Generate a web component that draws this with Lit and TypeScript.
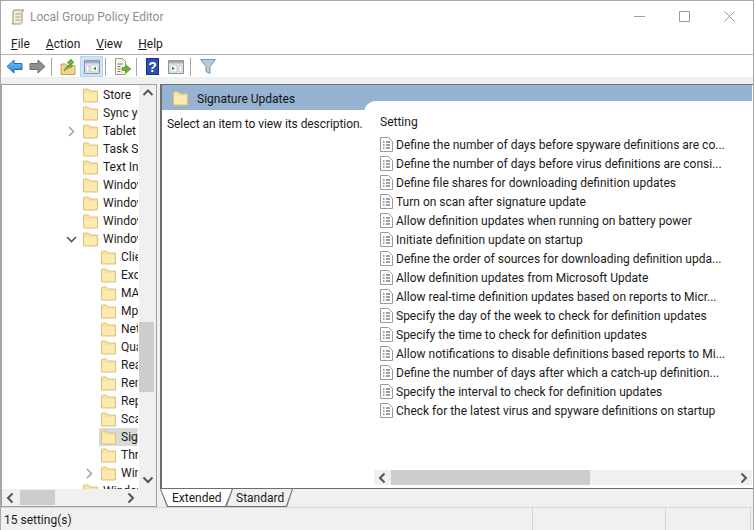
import { LitElement, html, css, svg } from "lit";
import { customElement } from "lit/decorators.js";

const folder = svg`<svg class="fold" width="17" height="15" viewBox="0 0 17 15"><path d="M1.500 3V2q0-1 1-1H6.500L8 3h7.500v11h-14z" fill="#f9e3a0" stroke="#dcc17c"/><path d="M2.500 5h12v8h-12z" fill="#fdeaae"/></svg>`;
const chevR = svg`<svg width="9" height="11" viewBox="0 0 9 11"><path d="M2 1l4.500 4.500L2 10" fill="none" stroke="#a6a6a6" stroke-width="1.600"/></svg>`;
const chevD = svg`<svg width="11" height="9" viewBox="0 0 11 9"><path d="M1 2l4.500 4.500L10 2" fill="none" stroke="#555" stroke-width="1.600"/></svg>`;
const doc = svg`<svg width="13" height="15" viewBox="0 0 13 15"><path d="M.5.5h8l4 4v10H.5z" fill="#fff" stroke="#9a9a9a"/><path d="M3 5h1.500M3 8h1.500M3 11h1.500M6 5h4M6 8h4M6 11h4" stroke="#444" stroke-width="1.100"/></svg>`;
const scrollArrow = (d: string) => {
  const paths: Record<string, string> = { u: "M1.500 7l4.500-4.500L10.500 7", d: "M1.500 2.500L6 7l4.500-4.500", l: "M7.500 1.500L3 6l4.500 4.500", r: "M3.500 1.500L8 6l-4.500 4.500" };
  return svg`<svg class="sa" width="12" height="12" viewBox="0 0 12 12"><path d=${paths[d]} fill="none" stroke="#555" stroke-width="2"/></svg>`;
};

const tree: [number, string, string, boolean?][] = [
  [0, "", "Store"], [0, "", "Sync your settings"], [0, "r", "Tablet PC"], [0, "", "Task Scheduler"], [0, "", "Text Input"],
  [0, "", "Windows Calendar"], [0, "", "Windows Color System"], [0, "", "Windows Customer"], [0, "d", "Windows Defender"],
  [1, "", "Client Interface"], [1, "", "Exclusions"], [1, "", "MAPS"], [1, "", "MpEngine"], [1, "", "Network Inspection"],
  [1, "", "Quarantine"], [1, "", "Real-time Protection"], [1, "", "Remediation"], [1, "", "Reporting"], [1, "", "Scan"],
  [1, "", "Signature Updates", true], [1, "", "Threats"], [1, "r", "Windows Defender"], [0, "", "Windows Error"],
];
const settings = [
  "Define the number of days before spyware definitions are co...",
  "Define the number of days before virus definitions are consi...",
  "Define file shares for downloading definition updates",
  "Turn on scan after signature update",
  "Allow definition updates when running on battery power",
  "Initiate definition update on startup",
  "Define the order of sources for downloading definition upda...",
  "Allow definition updates from Microsoft Update",
  "Allow real-time definition updates based on reports to Micr...",
  "Specify the day of the week to check for definition updates",
  "Specify the time to check for definition updates",
  "Allow notifications to disable definitions based reports to Mi...",
  "Define the number of days after which a catch-up definition...",
  "Specify the interval to check for definition updates",
  "Check for the latest virus and spyware definitions on startup",
];

@customElement("app-root")
export class AppRoot extends LitElement {
  static styles = css`
    :host { display: flex; flex-direction: column; width: 754px; height: 530px; box-sizing: border-box; background: #fff; border-top: 1px solid #a8a8a8; border-left: 1px solid #a8a8a8; border-right: 1px solid #a8a8a8; font: 12px Roboto, "Noto Sans", sans-serif; color: #1a1a1a; overflow: hidden; }
    svg { display: block; flex: none; }
    .title { height: 30px; flex: none; display: flex; align-items: center; padding: 1px 0 0 9px; gap: 4px; color: #8f8f8f; box-sizing: border-box; }
    .title .t { flex: 1; }
    .winbtns { display: flex; align-items: center; padding-right: 18px; gap: 34px; }
    .menu { height: 24px; flex: none; box-sizing: border-box; display: flex; align-items: center; padding: 2px 0 0 10px; gap: 16px; border-bottom: 1px solid #b4b4b4; }
    .menu u { text-decoration: underline; text-underline-offset: 1px; }
    .tools { height: 22px; flex: none; display: flex; align-items: center; padding: 1px 0 0 5px; box-sizing: border-box; }
    .sep { width: 1px; height: 18px; background: #a5a5a5; flex: none; }
    .ml2 { margin-left: 2px; } .ml4 { margin-left: 4px; } .ml5 { margin-left: 5px; } .ml6 { margin-left: 6px; } .ml8 { margin-left: 8px; } .ml9 { margin-left: 9px; }
    .active { background: #cce4f7; border: 1px solid #b4d6ef; height: 21px; width: 23px; display: flex; align-items: center; justify-content: center; box-sizing: border-box; flex: none; }
    .main { flex: 1; min-height: 0; display: flex; background: #f0f0f0; padding-top: 7px; gap: 3px; }
    .treebox { width: 156px; height: 423px; flex: none; box-sizing: border-box; background: #fff; border: 1px solid #a0a0a0; display: grid; grid-template-columns: 1fr 17px; grid-template-rows: 1fr 17px; }
    .rows { overflow: hidden; min-width: 0; min-height: 0; padding-top: 1px; }
    .row { height: 18px; display: flex; align-items: center; white-space: nowrap; padding-right: 1px; }
    .row .exp { width: 13px; margin-left: 63px; display: flex; align-items: center; justify-content: center; flex: none; }
    .row.l1 .exp { margin-left: 81px; }
    .row .sel { display: flex; align-items: center; gap: 4px; margin-left: 3px; padding-left: 1px; flex: 1; min-width: 0; height: 18px; overflow: hidden; }
    .row.cur .sel { background: #d9d9d9; }
    .vbar { background: #f0f0f0; display: flex; flex-direction: column; min-height: 0; }
    .arrow { height: 17px; width: 17px; display: flex; align-items: center; justify-content: center; flex: none; }
    .vtrack { flex: 1; }
    .vthumb { width: 15px; height: 70px; background: #cdcdcd; margin-top: 220px; }
    .hbar { background: #f0f0f0; display: flex; align-items: center; }
    .corner { background: #f0f0f0; }
    .hthumb { width: 35px; height: 15px; background: #cdcdcd; margin-left: 1px; }
    .hspacer { flex: 1; }
    .right { flex: 1; min-width: 0; display: flex; flex-direction: column; height: 423px; }
    .panel { height: 405px; flex: none; display: flex; background: #fff; border-top: 1px solid #6d6d6d; border-bottom: 1px solid #6d6d6d; border-left: 2px solid #6d6d6d; box-sizing: border-box; padding-right: 1px; }
    .desc { width: 202px; flex: none; display: flex; flex-direction: column; }
    .head { height: 25px; background: #97b3d2; display: flex; align-items: center; gap: 8px; padding: 2px 0 0 10px; flex: none; white-space: nowrap; box-sizing: border-box; color: #111; }
    .dtext { padding: 7px 0 0 5px; white-space: nowrap; letter-spacing: -0.07px; }
    .listwrap { flex: 1; background: #97b3d2; min-width: 0; display: flex; flex-direction: column; }
    .list { margin-top: 16px; flex: 1; background: #fff; border-top-left-radius: 12px; display: flex; flex-direction: column; padding-left: 10px; min-height: 0; overflow: hidden; }
    .lh { height: 34px; box-sizing: border-box; line-height: 18px; padding: 12px 0 0 6px; flex: none; }
    .item { height: 19px; display: flex; align-items: center; gap: 3px; padding-left: 6px; white-space: nowrap; flex: none; }
    .listbar { height: 15px; margin: auto 0 3px 0; background: #f0f0f0; display: flex; align-items: center; flex: none; }
    .lthumb { width: 199px; height: 15px; background: #cdcdcd; }
    .tabbed { display: flex; height: 18px; flex: none; }
    .tab1 { background: #6d6d6d; padding: 0 0 1px 0; clip-path: polygon(0 0, 100% 0, calc(100% - 6px) 100%, 7px 100%); }
    .tab1 span { display: flex; align-items: center; height: 100%; background: #fff; width: 72px; box-sizing: border-box; padding-left: 12px; clip-path: polygon(1px 0, 100% 0, calc(100% - 7px) 100%, 8px 100%); }
    .tab2 { background: #6d6d6d; padding: 0 0 1px 0; clip-path: polygon(6px 0, 100% 0, calc(100% - 6px) 100%, 0 100%); margin-left: -6px; }
    .tab2 span { display: flex; align-items: center; height: 100%; background: #f0f0f0; width: 67px; box-sizing: border-box; padding-left: 10px; clip-path: polygon(7px 0, calc(100% - 1px) 0, calc(100% - 7px) 100%, 1px 100%); }
    .status { height: 23px; flex: none; display: flex; align-items: center; background: #f0f0f0; border-top: 1px solid #d5d5d5; padding: 0 2px 0 3px; box-sizing: border-box; }
    .status .s { flex: 1; padding-top: 1px; }
    .status i { width: 1px; height: 100%; background: #d5d5d5; }
    .status .c { width: 132px; }
    .status .e { width: 84px; }
  `;

  render() {
    return html`
      <div class="title">
        <svg width="16" height="16" viewBox="0 0 16 16"><path d="M4 1h10l-2 2v9c0 2-1 3-2 3H2l1-2V3z" fill="#f4edd6" stroke="#9a9078"/><path d="M5.500 5h5M5.500 8h5M5.500 11h5" stroke="#a59a80"/></svg>
        <span class="t">Local Group Policy Editor</span>
        <div class="winbtns">
          <svg width="11" height="3" viewBox="0 0 11 3"><path d="M0 1.500h11" stroke="#a0a0a0"/></svg>
          <svg width="11" height="11" viewBox="0 0 11 11"><path d="M.5.5h10v10H.5z" fill="none" stroke="#9a9a9a"/></svg>
          <svg width="11" height="11" viewBox="0 0 11 11"><path d="M.5.5l10 10M10.500.5l-10 10" stroke="#9a9a9a"/></svg>
        </div>
      </div>
      <div class="menu">
        <span><u>F</u>ile</span><span><u>A</u>ction</span><span><u>V</u>iew</span><span><u>H</u>elp</span>
      </div>
      <div class="tools">
        <svg width="17" height="15" viewBox="0 0 17 15"><defs><linearGradient id="b" x1="0" y1="0" x2="0" y2="1"><stop offset="0" stop-color="#7cc8f5"/><stop offset="1" stop-color="#1f86d8"/></linearGradient></defs><path d="M8 1L1 7.500 8 14v-3.500h8v-6H8z" fill="url(#b)" stroke="#1f6fb5"/></svg>
        <svg class="ml6" width="17" height="15" viewBox="0 0 17 15"><path d="M9 1l7 6.500L9 14v-3.500H1v-6h8z" fill="#8e8e8e" stroke="#6b6b6b"/></svg>
        <div class="sep ml5"></div>
        <svg class="ml8" width="16" height="17" viewBox="0 0 16 17"><path d="M1 6h5l1 1.500h8v9H1z" fill="#f0d488" stroke="#c4a662"/><path d="M4 13c1-3 3-5 5-6V5H7l4-4 3 4h-2v4c-2 0-5 1-8 4z" fill="#6fb13c" stroke="#4c8a25" stroke-width=".6"/></svg>
        <div class="active ml4"><svg width="16" height="14" viewBox="0 0 16 14"><path d="M.5.5h15v13H.5z" fill="#eef2f6" stroke="#8a949e"/><path d="M1 1h14v2.500H1z" fill="#a3aeb9"/><path d="M2 5h3v7H2zM7 5h7v7H7z" fill="#fff" stroke="#9aa5b0" stroke-width=".6"/><path d="M12 6.500L9 8.500l3 2z" fill="#3a9a3a"/></svg></div>
        <div class="sep ml2"></div>
        <svg class="ml8" width="17" height="17" viewBox="0 0 17 17"><path d="M1.500.5h7l3 3v13h-10z" fill="#f7f3e4" stroke="#a09a88"/><path d="M3.500 6h5M3.500 8.500h3M3.500 11h3M3.500 13.500h3" stroke="#777"/><path d="M8 9.500h4V7l5 4-5 4v-2.500H8z" fill="#68b83c" stroke="#4c8a25" stroke-width=".6"/></svg>
        <div class="sep ml5"></div>
        <svg class="ml9" width="13" height="17" viewBox="0 0 13 17"><rect x=".5" y=".5" width="12" height="16" fill="#2c4fb0" stroke="#1a2f7a"/><text x="6.500" y="13.500" text-anchor="middle" font-size="14" font-weight="700" fill="#fff" font-family="Liberation Sans">?</text></svg>
        <svg class="ml9" width="16" height="14" viewBox="0 0 16 14"><path d="M.5.5h15v13H.5z" fill="#eef2f6" stroke="#8a949e"/><path d="M1 1h14v2.500H1z" fill="#a3aeb9"/><path d="M2 5h7v7H2zM11 5h3v7h-3z" fill="#fff" stroke="#9aa5b0" stroke-width=".6"/><path d="M4 6.500l3 2-3 2z" fill="#3a9a3a"/></svg>
        <div class="sep ml6"></div>
        <svg class="ml9" width="16" height="17" viewBox="0 0 16 17"><path d="M.5 1.500h15L10 8.500v7l-4-2v-5z" fill="#b7cbdc" stroke="#7d92a6"/></svg>
      </div>
      <div class="main">
        <div class="treebox">
          <div class="rows">
            ${tree.map(([lvl, exp, label, cur]) => html`
              <div class="row l${lvl} ${cur ? "cur" : ""}">
                <span class="exp">${exp === "r" ? chevR : exp === "d" ? chevD : ""}</span>
                <div class="sel">${folder}<span>${label}</span></div>
              </div>`)}
          </div>
          <div class="vbar">
            <div class="arrow">${scrollArrow("u")}</div>
            <div class="vtrack"><div class="vthumb"></div></div>
            <div class="arrow">${scrollArrow("d")}</div>
          </div>
          <div class="hbar">
            <div class="arrow">${scrollArrow("l")}</div>
            <div class="hthumb"></div>
            <div class="hspacer"></div>
            <div class="arrow">${scrollArrow("r")}</div>
          </div>
          <div class="corner"></div>
        </div>
        <div class="right">
          <div class="panel">
            <div class="desc">
              <div class="head">${folder}<span>Signature Updates</span></div>
              <div class="dtext">Select an item to view its description.</div>
            </div>
            <div class="listwrap">
              <div class="list">
                <div class="lh">Setting</div>
                ${settings.map((s) => html`<div class="item">${doc}<span>${s}</span></div>`)}
                <div class="listbar">
                  <div class="arrow">${scrollArrow("l")}</div>
                  <div class="lthumb"></div>
                  <div class="hspacer"></div>
                  <div class="arrow">${scrollArrow("r")}</div>
                </div>
              </div>
            </div>
          </div>
          <div class="tabbed">
            <div class="tab1"><span>Extended</span></div>
            <div class="tab2"><span>Standard</span></div>
          </div>
        </div>
      </div>
      <div class="status">
        <span class="s">15 setting(s)</span><i></i><span class="c"></span><i></i><span class="e"></span><i></i>
      </div>
    `;
  }
}
